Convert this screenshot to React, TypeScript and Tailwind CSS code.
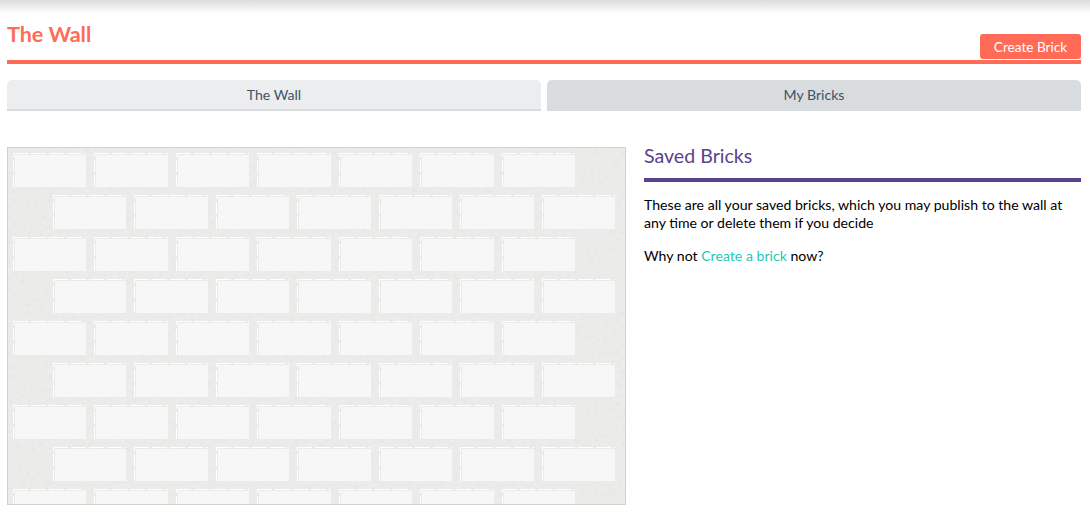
const rows = [0, 1, 2, 3, 4, 5, 6, 7, 8];
const bricks = [0, 1, 2, 3, 4, 5, 6];

function WallTexture() {
  return (
    <svg className="pointer-events-none absolute inset-0 h-full w-full opacity-[0.09]">
      <filter id="paper">
        <feTurbulence type="fractalNoise" baseFrequency="0.22" numOctaves="3" seed="4" />
        <feColorMatrix type="saturate" values="0" />
      </filter>
      <rect width="100%" height="100%" filter="url(#paper)" />
    </svg>
  );
}

function Wall() {
  return (
    <div className="relative h-[358px] w-[619px] shrink-0 overflow-hidden border border-[#d2d1ca] bg-[#ededeb] pt-[5px]">
      <WallTexture />
      <div className="relative flex flex-col gap-[8px]">
        {rows.map((row) => (
          <div key={row} className={`flex gap-[8px] ${row % 2 === 0 ? 'pl-[4.5px]' : 'pl-[44.5px]'}`}>
            {bricks.map((brick) => (
              <div
                key={brick}
                className="h-[34px] w-[73.5px] shrink-0 [background:repeating-linear-gradient(90deg,#fff_0_15px,transparent_15px_18px)_top/100%_1px_no-repeat,repeating-linear-gradient(0deg,#fff_0_12px,transparent_12px_15px)_left/1px_100%_no-repeat,linear-gradient(#f7f7f7,#f7f7f7)_2px_2px/100%_100%_no-repeat]"
              />
            ))}
          </div>
        ))}
      </div>
    </div>
  );
}

export default function App() {
  return (
    <div className="min-h-[521px] bg-white font-['Lato',sans-serif]">
      <div className="h-[14px] bg-gradient-to-b from-[#dcdcdc] to-white" />

      <div className="px-[9px] pl-[7px]">
        <div className="flex h-[50px] items-end justify-between border-b-4 border-[#ff6b57]">
          <h1 className="pb-[12px] text-[21.5px] leading-[28px] font-bold text-[#ff6b57]">The Wall</h1>
          <button className="mb-px h-[25px] w-[101px] rounded-[3px] bg-[#ff6b57] pt-[2px] text-[13.6px] text-white">
            Create Brick
          </button>
        </div>

        <div className="mt-4 flex gap-[6px]">
          <button className="h-[31px] flex-1 rounded-t-[5px] border-b-2 border-[#d9dcdf] bg-[#ebedef] text-[14.1px] text-[#3d5466]">
            The Wall
          </button>
          <button className="h-[31px] flex-1 rounded-t-[5px] border-b-2 border-transparent bg-[#d9dcdf] text-[14.1px] text-[#3d5466]">
            My Bricks
          </button>
        </div>

        <div className="mt-9 flex gap-[18px]">
          <Wall />
          <div className="flex-1 text-[14.12px] leading-[18px] text-black">
            <h2 className="border-b-4 border-[#5b4289] pb-[13px] text-[19.6px] leading-[18px] text-[#5b4289]">
              Saved Bricks
            </h2>
            <p className="mt-[14px]">
              These are all your saved bricks, which you may publish to the wall at any time or delete them if you decide
            </p>
            <p className="mt-[15px]">
              Why not <a className="text-[#1fc8b4]">Create a brick</a> now?
            </p>
          </div>
        </div>
      </div>
    </div>
  );
}
